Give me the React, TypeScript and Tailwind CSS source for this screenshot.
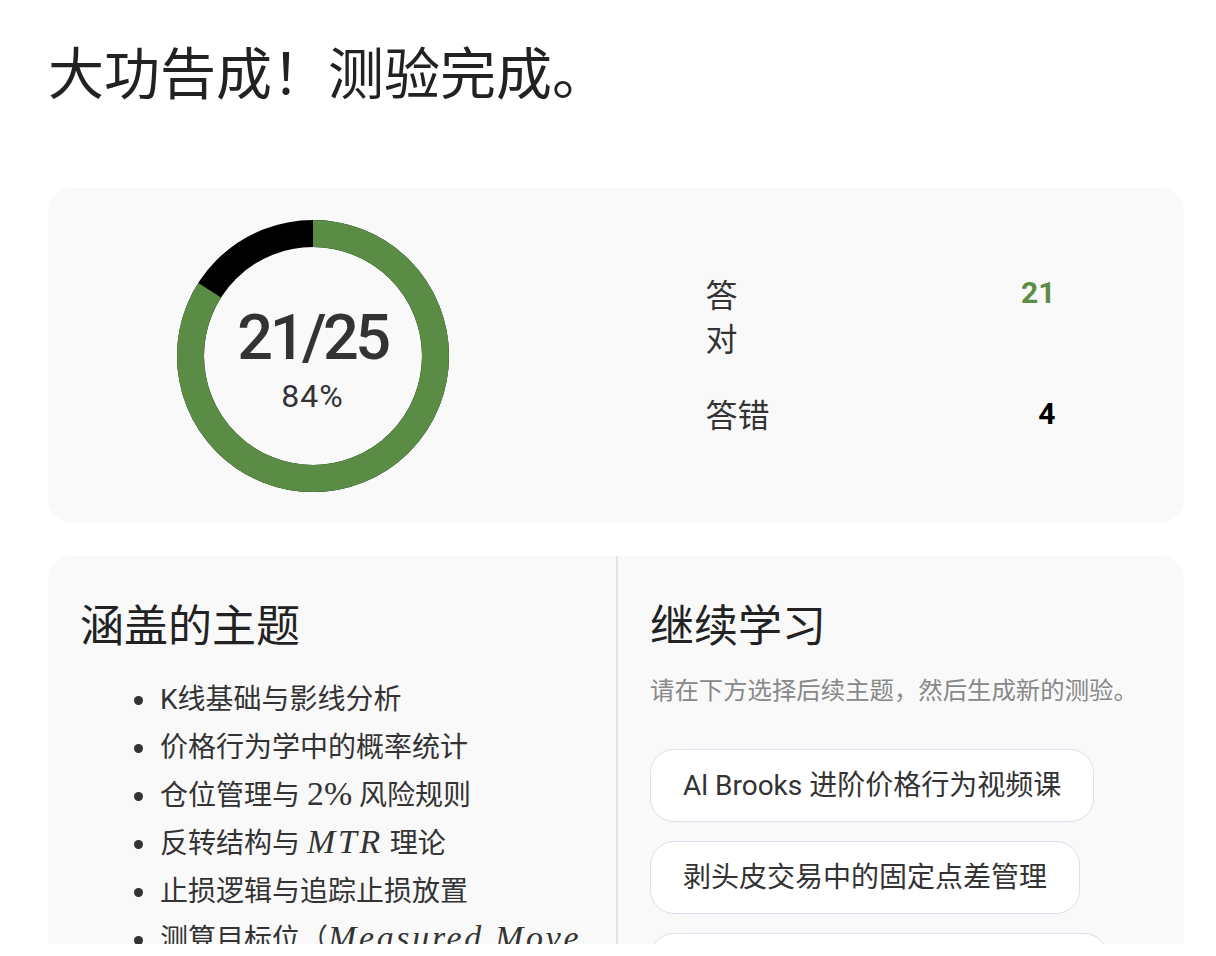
import React from "react";

const SANS = { fontFamily: 'Roboto, "Noto Sans CJK SC", sans-serif' };
const MATH = { fontFamily: '"Liberation Serif", "Noto Sans CJK SC", serif' };

const GREEN = "#5b8c46";

function ScoreRing({ correct, total }: { correct: number; total: number }) {
  const size = 272;
  const stroke = 27;
  const r = (size - stroke) / 2;
  const c = 2 * Math.PI * r;
  const frac = correct / total;
  return (
    <div className="relative h-[272px] w-[272px] shrink-0">
      <svg width={size} height={size} viewBox={`0 0 ${size} ${size}`}>
        <circle cx={size / 2} cy={size / 2} r={r} fill="none" stroke="#000" strokeWidth={stroke} />
        <circle
          cx={size / 2}
          cy={size / 2}
          r={r}
          fill="none"
          stroke={GREEN}
          strokeWidth={stroke}
          strokeDasharray={`${c * frac} ${c}`}
          transform={`rotate(-90 ${size / 2} ${size / 2})`}
        />
      </svg>
      <div className="absolute inset-0 flex flex-col items-center justify-center pt-[6px] text-[#333]">
        <div className="text-[63px] leading-[70px] tracking-[-3.5px] font-medium">
          {correct}/{total}
        </div>
        <div className="mt-[5px] text-[32px] leading-[36px] tracking-[1px]">
          {Math.round(frac * 100)}%
        </div>
      </div>
    </div>
  );
}

const topics: React.ReactNode[] = [
  "K线基础与影线分析",
  "价格行为学中的概率统计",
  <>
    仓位管理与 <span style={MATH} className="text-[1.21em] leading-none">2%</span> 风险规则
  </>,
  <>
    反转结构与{" "}
    <span style={MATH} className="text-[1.21em] italic leading-none tracking-[0.08em]">
      MTR
    </span>{" "}
    理论
  </>,
  "止损逻辑与追踪止损放置",
  <>
    测算目标位（
    <span style={MATH} className="whitespace-nowrap text-[1.21em] italic leading-none tracking-[0.08em]">
      Measured Move
    </span>
    <br />）
  </>,
];

const nextTopics = [
  "Al Brooks 进阶价格行为视频课",
  "剥头皮交易中的固定点差管理",
  "高胜率形态识别与二次入场策略",
];

export default function App() {
  return (
    <div style={SANS} className="h-[944px] overflow-hidden bg-white pl-[48px] pr-[32px]">
      <h1 className="mt-[43px] text-[56px] leading-[65px] font-normal text-[#222]">
        大功告成！测验完成。
      </h1>

      <section className="mt-[80px] flex h-[335px] items-center justify-around rounded-[24px] bg-[#f9f9f9]">
        <ScoreRing correct={21} total={25} />
        <div className="flex w-[350px] flex-col gap-[32px] text-[#333]">
          <div className="flex items-start justify-between">
            <span className="w-[34px] text-[32px] leading-[44px]">答对</span>
            <span className="text-[30px] leading-[38px] font-bold" style={{ color: GREEN }}>
              21
            </span>
          </div>
          <div className="flex items-start justify-between">
            <span className="whitespace-nowrap text-[32px] leading-[44px]">答错</span>
            <span className="text-[30px] leading-[40px] font-bold text-black">4</span>
          </div>
        </div>
      </section>

      <section className="mt-[33px] flex rounded-t-[24px] bg-[#f9f9f9] pb-[40px]">
        <div className="w-[570px] shrink-0 border-r-2 border-[#e0e2f0] px-[32px] pt-[43px]">
          <h2 className="text-[44px] leading-[57px] font-normal text-[#222]">涵盖的主题</h2>
          <ul className="mt-[20px] list-disc pl-[78px] text-[28px] leading-[48px] text-[#333]">
            {topics.map((t, i) => (
              <li key={i} className="pl-[2px] marker:text-[#333]">
                {t}
              </li>
            ))}
          </ul>
        </div>
        <div className="flex-1 px-[32px] pt-[43px]">
          <h2 className="text-[44px] leading-[57px] font-normal text-[#222]">继续学习</h2>
          <p className="mt-[17px] text-[24.4px] leading-[36px] text-[#888]">
            请在下方选择后续主题，然后生成新的测验。
          </p>
          <div className="mt-[40px] flex flex-col items-start gap-[19px]">
            {nextTopics.map((t) => (
              <button
                key={t}
                type="button"
                className="rounded-[24px] border-[1.5px] border-[#dcdfee] bg-white px-[32px] py-[14px] text-[28px] leading-[43px] text-[#333]"
              >
                {t}
              </button>
            ))}
          </div>
        </div>
      </section>
    </div>
  );
}
